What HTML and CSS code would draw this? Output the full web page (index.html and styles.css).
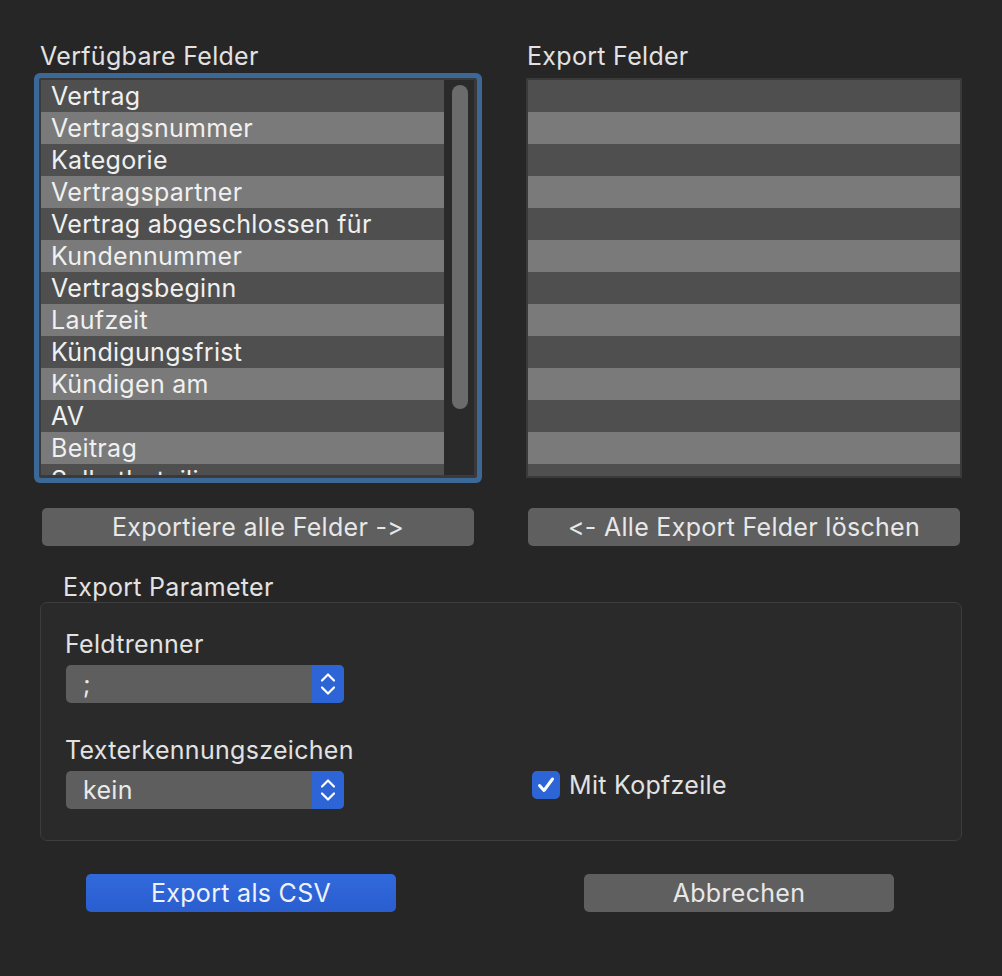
FILE: index.html
```html
<!DOCTYPE html>
<html lang="de">
<head>
    <meta charset="UTF-8">
    <title>CSV Export</title>
    <link rel="stylesheet" href="styles.css">
</head>
<body>
    <div class="window">
        <div class="fields">
            <div class="column">
                <h2 class="title">Verfügbare Felder</h2>
                <div class="frame focused">
                    <div class="rows">
                        <div class="row">Vertrag</div>
                        <div class="row">Vertragsnummer</div>
                        <div class="row">Kategorie</div>
                        <div class="row">Vertragspartner</div>
                        <div class="row">Vertrag abgeschlossen für</div>
                        <div class="row">Kundennummer</div>
                        <div class="row">Vertragsbeginn</div>
                        <div class="row">Laufzeit</div>
                        <div class="row">Kündigungsfrist</div>
                        <div class="row">Kündigen am</div>
                        <div class="row">AV</div>
                        <div class="row">Beitrag</div>
                        <div class="row">Selbstbeteiligung</div>
                    </div>
                    <div class="scroller"><div class="thumb"></div></div>
                </div>
                <button class="btn wide">Exportiere alle Felder -&gt;</button>
            </div>
            <div class="column">
                <h2 class="title">Export Felder</h2>
                <div class="frame">
                    <div class="rows">
                        <div class="row"></div><div class="row"></div><div class="row"></div>
                        <div class="row"></div><div class="row"></div><div class="row"></div>
                        <div class="row"></div><div class="row"></div><div class="row"></div>
                        <div class="row"></div><div class="row"></div><div class="row"></div>
                        <div class="row"></div>
                    </div>
                </div>
                <button class="btn wide">&lt;- Alle Export Felder löschen</button>
            </div>
        </div>

        <h3 class="group-title">Export Parameter</h3>
        <div class="group">
            <div class="field">
                <label>Feldtrenner</label>
                <div class="popup">
                    <span class="value">;</span>
                    <span class="stepper">
                        <svg width="32" height="38" viewBox="0 0 32 38"><path d="M10 15.5 L16 9.5 L22 15.5 M10 22.5 L16 28.5 L22 22.5" fill="none" stroke="#fff" stroke-width="2.2" stroke-linecap="round" stroke-linejoin="round"/></svg>
                    </span>
                </div>
            </div>
            <div></div>
            <div class="field">
                <label>Texterkennungszeichen</label>
                <div class="popup">
                    <span class="value">kein</span>
                    <span class="stepper">
                        <svg width="32" height="38" viewBox="0 0 32 38"><path d="M10 15.5 L16 9.5 L22 15.5 M10 22.5 L16 28.5 L22 22.5" fill="none" stroke="#fff" stroke-width="2.2" stroke-linecap="round" stroke-linejoin="round"/></svg>
                    </span>
                </div>
            </div>
            <div class="check">
                <span class="box">
                    <svg width="28" height="28" viewBox="0 0 28 28"><path d="M7.5 14.5 L12 19.5 L20.5 8" fill="none" stroke="#fff" stroke-width="3" stroke-linecap="round" stroke-linejoin="round"/></svg>
                </span>
                <span>Mit Kopfzeile</span>
            </div>
        </div>

        <div class="actions">
            <button class="btn action primary">Export als CSV</button>
            <button class="btn action">Abbrechen</button>
        </div>
    </div>
</body>
</html>
```

FILE: styles.css
```css
* {
    margin: 0;
    padding: 0;
    box-sizing: border-box;
    font-family: Inter, "Noto Sans", sans-serif;
    font-feature-settings: "calt" 0, "liga" 0;
    letter-spacing: 0.3px;
}
body {
    background-color: #262626;
    color: #e2e2e2;
    width: 1002px;
    height: 976px;
    overflow: hidden;
}
.window {
    padding: 42px 0 0 39px;
}
.fields {
    display: grid;
    grid-template-columns: 438px 436px;
    column-gap: 49px;
}
.title {
    font-size: 25px;
    font-weight: 400;
    line-height: 28px;
    margin: 0 0 8px 1px;
    color: #e2e2e2;
}
.frame {
    display: flex;
    height: 400px;
    border: 2px solid #3a3a3a;
    background: #4f4f4f;
    overflow: hidden;
}
.frame.focused {
    border-width: 2px 3px 3px 2px;
    border-radius: 2px;
    box-shadow: 0 0 0 5px #3b6896;
}
.rows {
    flex: 1;
    overflow: hidden;
}
.row {
    height: 32px;
    line-height: 33px;
    padding-left: 10px;
    font-size: 25px;
    color: #f0f0f0;
    background: #4f4f4f;
    white-space: nowrap;
}
.row:nth-child(even) {
    background: #7a7a7a;
}
.scroller {
    width: 30px;
    background: #2a2a2a;
    padding-top: 5px;
}
.thumb {
    width: 16px;
    height: 324px;
    margin-left: 8px;
    border-radius: 8px;
    background: #6b6b6b;
}
.btn {
    display: block;
    height: 38px;
    border: none;
    border-radius: 5px;
    background: #5f5f5f;
    color: #e8e8e8;
    font-size: 25px;
    cursor: pointer;
}
.btn.wide {
    width: 432px;
    margin: 30px 0 0 2px;
}
.column:first-child .btn.wide {
    margin-left: 3px;
}
.group-title {
    font-size: 25px;
    font-weight: 400;
    line-height: 28px;
    margin: 27px 0 1px 24px;
    color: #e2e2e2;
}
.group {
    width: 922px;
    height: 239px;
    margin-left: 1px;
    border: 1.5px solid #3d3d3d;
    border-radius: 7px;
    background: #2a2a2a;
    display: grid;
    grid-template-columns: 467px auto;
    align-content: start;
    row-gap: 33px;
    padding: 27px 0 0 24px;
}
.field label {
    display: block;
    font-size: 25px;
    line-height: 28px;
    margin-bottom: 7px;
}
.popup {
    display: flex;
    width: 278px;
    height: 38px;
    margin-left: 1px;
    border-radius: 5px;
    background: #5e5e5e;
    overflow: hidden;
}
.popup .value {
    flex: 1;
    padding-left: 17px;
    line-height: 38px;
    font-size: 25px;
    color: #eaeaea;
}
.stepper {
    width: 32px;
    height: 38px;
    background: #2d64d6;
}
.check {
    align-self: end;
    display: flex;
    align-items: center;
    gap: 9px;
    font-size: 25px;
    margin-bottom: 9px;
}
.box {
    width: 28px;
    height: 28px;
    border-radius: 5px;
    background: #2d64d6;
}
.box svg {
    display: block;
}
.actions {
    display: flex;
    gap: 188px;
    margin: 33px 0 0 47px;
}
.btn.action {
    width: 310px;
}
.btn.primary {
    background: linear-gradient(#3169dc, #2a5ecf);
    color: #eef2fb;
}
```
